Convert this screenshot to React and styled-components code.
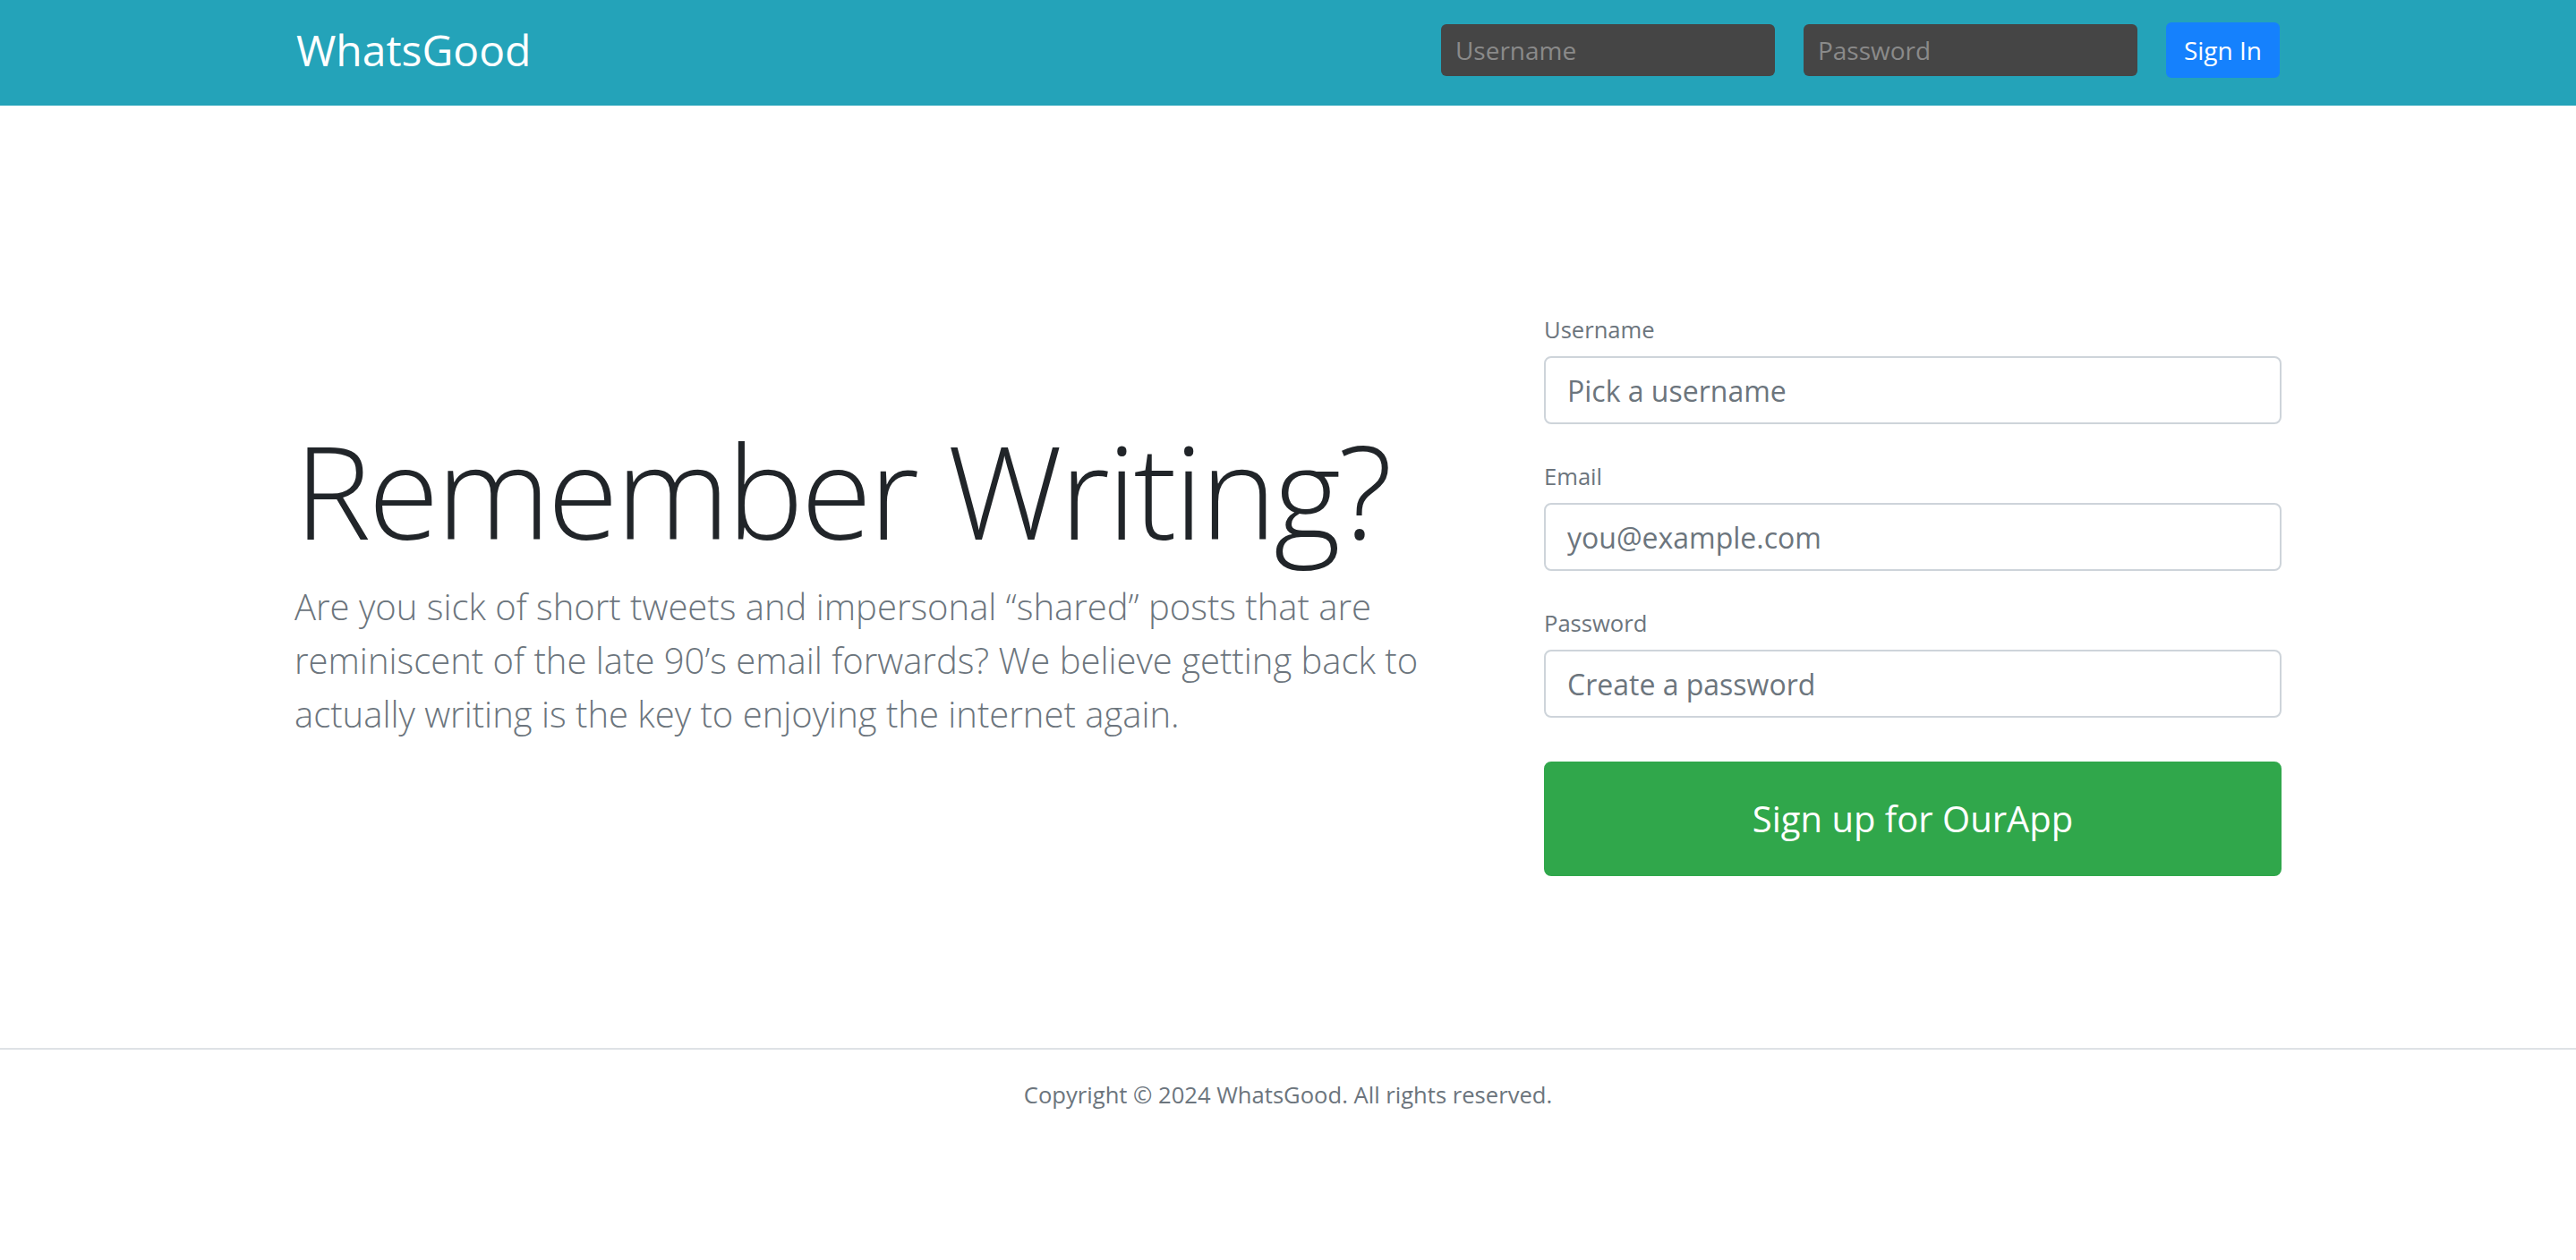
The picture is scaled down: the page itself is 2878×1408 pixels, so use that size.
import React from "react";
import styled, { createGlobalStyle } from "styled-components";

const GlobalStyle = createGlobalStyle`
  * {
    box-sizing: border-box;
  }
  body {
    margin: 0;
    background: #fff;
    font-family: "Open Sans", "Noto Sans", sans-serif;
    font-size: 32px;
    line-height: 1.5;
    color: #212529;
  }
`;

const App = () => {
  return (
    <>
      <GlobalStyle />
      <HeaderBar>
        <HeaderInner>
          <Logo href="#">WhatsGood</Logo>
          <SignInForm onSubmit={(e) => e.preventDefault()}>
            <DarkInput type="text" placeholder="Username" />
            <DarkInput type="password" placeholder="Password" />
            <SignInButton type="submit">Sign In</SignInButton>
          </SignInForm>
        </HeaderInner>
      </HeaderBar>

      <Main>
        <Row>
          <IntroCol>
            <Headline>Remember Writing?</Headline>
            <Lead>
              Are you sick of short tweets and impersonal “shared” posts that
              are reminiscent of the late 90’s email forwards? We believe
              getting back to actually writing is the key to enjoying the
              internet again.
            </Lead>
          </IntroCol>

          <FormCol>
            <form onSubmit={(e) => e.preventDefault()}>
              <FormGroup>
                <Label htmlFor="username-register">
                  <small>Username</small>
                </Label>
                <Input id="username-register" type="text" placeholder="Pick a username" />
              </FormGroup>
              <FormGroup>
                <Label htmlFor="email-register">
                  <small>Email</small>
                </Label>
                <Input id="email-register" type="text" placeholder="you@example.com" />
              </FormGroup>
              <FormGroup last>
                <Label htmlFor="password-register">
                  <small>Password</small>
                </Label>
                <Input id="password-register" type="password" placeholder="Create a password" />
              </FormGroup>
              <SignUpButton type="submit">Sign up for OurApp</SignUpButton>
            </form>
          </FormCol>
        </Row>
      </Main>

      <Footer>
        <p>Copyright © 2024 WhatsGood. All rights reserved.</p>
      </Footer>
    </>
  );
};

// Styled Components
const HeaderBar = styled.header`
  background-color: #24a3b9;
  margin-bottom: 32px;
`;

const HeaderInner = styled.div`
  max-width: 2280px;
  margin: 0 auto;
  padding: 25px 32px 31px;
  display: flex;
  align-items: center;
`;

const Logo = styled.a`
  margin-right: auto;
  color: #fff;
  text-decoration: none;
  font-size: 48px;
  font-weight: 400;
  line-height: 1.2;
`;

const SignInForm = styled.form`
  display: flex;
  align-items: center;
  gap: 32px;
  margin: 0;
`;

const DarkInput = styled.input`
  width: 373px;
  height: 58px;
  padding: 0 16px;
  border: none;
  border-radius: 6px;
  background-color: #454545;
  color: #fff;
  font-family: inherit;
  font-size: 28px;
  outline: none;

  &::placeholder {
    color: #8a8a8a;
  }
`;

const SignInButton = styled.button`
  height: 62px;
  padding: 0 18px;
  border: 2px solid #1581fd;
  border-radius: 6px;
  background-color: #1581fd;
  color: #fff;
  font-family: inherit;
  font-size: 28px;
  line-height: 1.5;
  cursor: pointer;
`;

const Main = styled.main`
  max-width: 2280px;
  margin: 0 auto;
  padding: 96px 0;
`;

const Row = styled.div`
  display: flex;
  align-items: center;
`;

const IntroCol = styled.div`
  flex: 0 0 58.3333%;
  padding: 96px 30px;
`;

const FormCol = styled.div`
  flex: 0 0 41.6667%;
  padding: 96px 30px 96px 96px;
`;

const Headline = styled.h1`
  margin: 0 0 14px;
  font-size: 144px;
  font-weight: 300;
  line-height: 1.2;
  letter-spacing: -3px;
  white-space: nowrap;
  color: #212529;
`;

const Lead = styled.p`
  margin: 0 0 32px;
  font-size: 40px;
  font-weight: 300;
  line-height: 1.5;
  color: #6c757d;
`;

const FormGroup = styled.div`
  margin-bottom: ${(p) => (p.last ? "0" : "32px")};
`;

const Label = styled.label`
  display: inline-block;
  margin-bottom: 8px;
  color: #6c757d;

  small {
    font-size: 80%;
  }
`;

const Input = styled.input`
  display: block;
  width: 100%;
  height: 76px;
  padding: 12px 24px;
  border: 2px solid #ced4da;
  border-radius: 8px;
  background: #fff;
  color: #495057;
  font-family: inherit;
  font-size: 32px;
  line-height: 1.5;
  outline: none;

  &::placeholder {
    color: #6c757d;
  }
`;

const SignUpButton = styled.button`
  display: block;
  width: 100%;
  margin-top: 49px;
  padding: 32px 32px;
  border: 2px solid #30a74b;
  border-radius: 8px;
  background-color: #30a74b;
  color: #fff;
  font-family: inherit;
  font-size: 40px;
  line-height: 1.5;
  cursor: pointer;
`;

const Footer = styled.footer`
  border-top: 2px solid #dee2e6;
  padding: 32px 0;
  text-align: center;
  font-size: 25.6px;
  color: #6c757d;

  p {
    margin: 0;
  }
`;

export default App;
